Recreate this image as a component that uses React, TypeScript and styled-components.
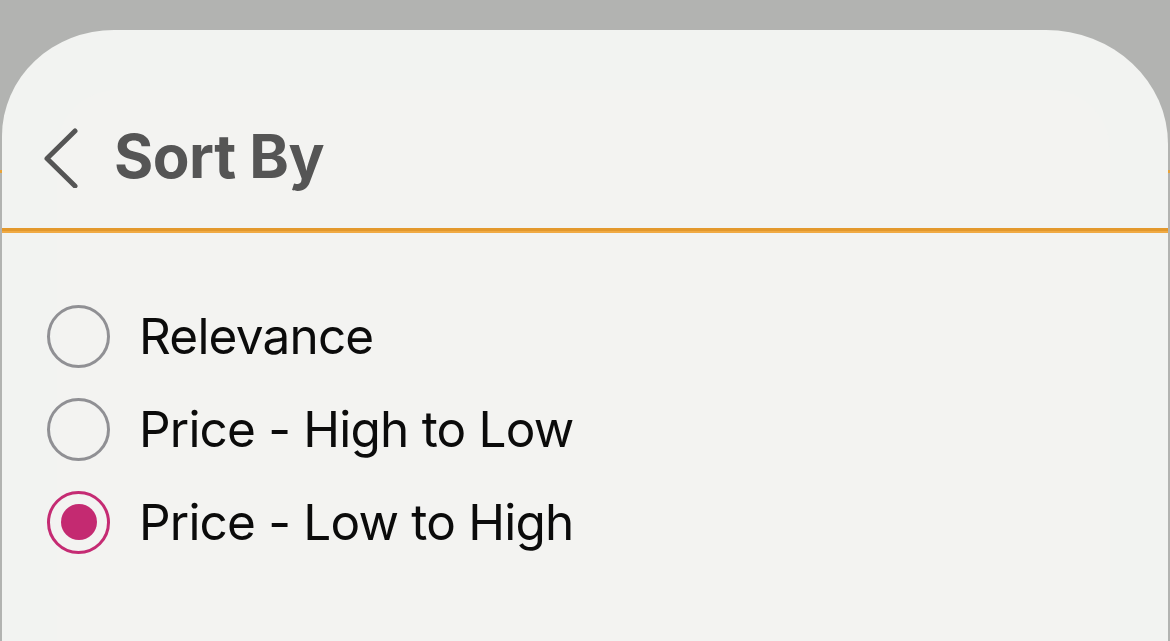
import React from "react";
import styled, { createGlobalStyle } from "styled-components";

const Global = createGlobalStyle`
  html, body {
    margin: 0;
    padding: 0;
    width: 1170px;
    height: 641px;
    overflow: hidden;
  }
  body {
    background:
      linear-gradient(to bottom, transparent 170px, #e7a33a 170px, #e7a33a 173px, transparent 173px),
      #b2b3b1;
    font-family: Inter, "Noto Sans", "Liberation Sans", sans-serif;
  }
`;

const Sheet = styled.div`
  margin: 30px 0 0 2px;
  width: 1166px;
  height: 611px;
  background: #f2f3f1;
  border-radius: 112px 122px 0 0 / 106px 114px 0 0;
  position: relative;
  display: flex;
  flex-direction: column;
  overflow: hidden;
`;

const Glow = styled.div`
  position: absolute;
  left: 55px;
  right: 58px;
  top: 60px;
  bottom: 0;
  border-radius: 60px 60px 0 0;
  background: #f3f3f1;
  pointer-events: none;
`;

const Header = styled.header`
  position: relative;
  height: 198px;
  box-sizing: border-box;
  padding: 94px 0 0 40px;
  display: flex;
  align-items: flex-start;
`;

const BackButton = styled.button`
  border: 0;
  background: none;
  padding: 0;
  margin: 0;
  width: 40px;
  height: 64px;
  display: block;
  cursor: pointer;
`;

const Title = styled.h1`
  margin: 0 0 0 32px;
  font-family: Inter, "Liberation Sans", sans-serif;
  font-weight: 700;
  font-size: 60px;
  line-height: 64px;
  color: #555555;
  letter-spacing: -0.5px;
`;

const Divider = styled.div`
  position: relative;
  height: 5px;
  border-top: 3px solid #e3982c;
  border-bottom: 2px solid #f0aa44;
  box-sizing: border-box;
`;

const List = styled.div`
  position: relative;
  padding: 72px 0 0 45px;
  display: flex;
  flex-direction: column;
  gap: 31px;
`;

const Row = styled.label`
  display: flex;
  align-items: center;
  gap: 29px;
  height: 62px;
  cursor: pointer;
`;

const Radio = styled.span<{ $checked: boolean }>`
  width: 63px;
  height: 63px;
  box-sizing: border-box;
  border-radius: 50%;
  border: 3px solid ${(p) => (p.$checked ? "#c52b73" : "#909094")};
  display: flex;
  align-items: center;
  justify-content: center;
  flex-shrink: 0;
  &::after {
    content: "";
    display: ${(p) => (p.$checked ? "block" : "none")};
    width: 36px;
    height: 36px;
    border-radius: 50%;
    background: #c42a71;
  }
`;

const Label = styled.span`
  font-family: Inter, "Liberation Sans", sans-serif;
  font-size: 49.5px;
  font-weight: 400;
  color: #0b0b0b;
  letter-spacing: -0.8px;
  line-height: 62px;
`;

const options = ["Relevance", "Price - High to Low", "Price - Low to High"];

export default function App() {
  const selected = 2;
  return (
    <>
      <Global />
      <Sheet>
        <Glow />
        <Header>
          <BackButton aria-label="Back">
            <svg width="40" height="64" viewBox="0 0 40 64">
              <path
                d="M33 7 L5 34.5 L33 62"
                fill="none"
                stroke="#555555"
                strokeWidth="5"
                strokeLinecap="round"
                strokeLinejoin="round"
              />
            </svg>
          </BackButton>
          <Title>Sort By</Title>
        </Header>
        <Divider />
        <List>
          {options.map((o, i) => (
            <Row key={o}>
              <Radio $checked={i === selected} />
              <Label>{o}</Label>
            </Row>
          ))}
        </List>
      </Sheet>
    </>
  );
}
